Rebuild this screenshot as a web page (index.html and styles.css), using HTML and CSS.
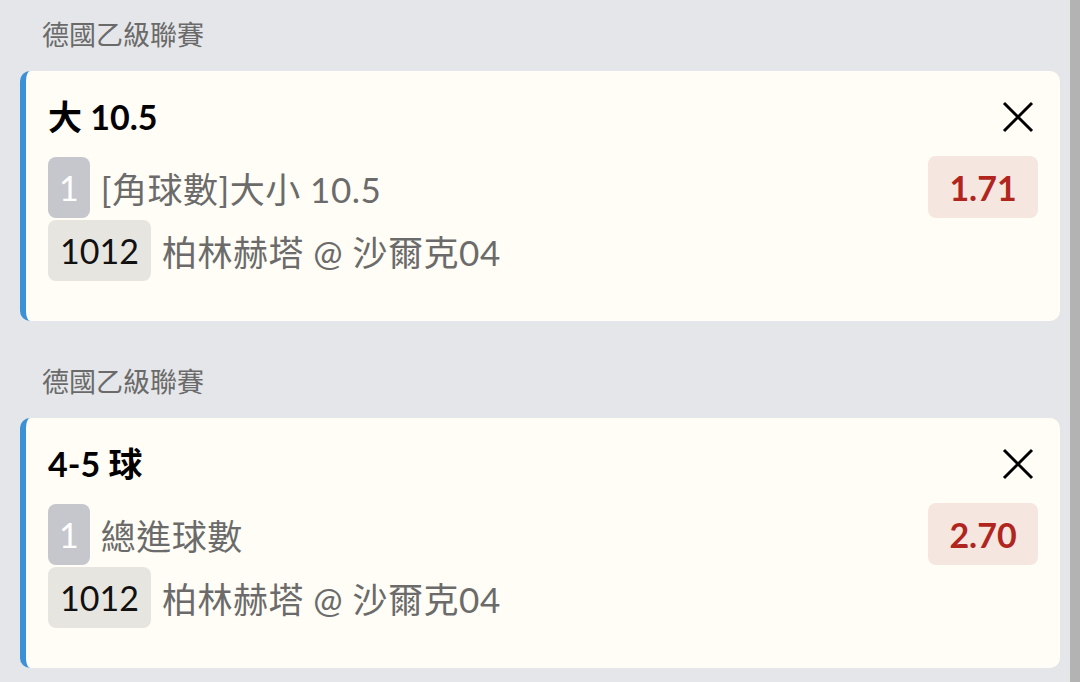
FILE: index.html
```html
<!DOCTYPE html>
<html lang="zh-Hant">
<head>
    <meta charset="UTF-8">
    <meta name="viewport" content="width=device-width, initial-scale=1.0">
    <title>投注單</title>
    <link rel="stylesheet" href="styles.css">
</head>
<body>
    <main class="bet-list">
        <section class="bet-group">
            <h2 class="league">德國乙級聯賽</h2>
            <div class="bet-card">
                <div class="bet-head">
                    <span class="selection">大 10.5</span>
                    <button class="close" type="button" aria-label="移除">
                        <svg width="32" height="32" viewBox="0 0 32 32"><path d="M2 2 L30 30 M30 2 L2 30" stroke="#000" stroke-width="3" fill="none"/></svg>
                    </button>
                </div>
                <div class="bet-row">
                    <div class="bet-info">
                        <span class="tag tag-grey">1</span>
                        <span class="market">[角球數]大小 10.5</span>
                    </div>
                    <span class="odds">1.71</span>
                </div>
                <div class="bet-row">
                    <div class="bet-info">
                        <span class="tag tag-light">1012</span>
                        <span class="market">柏林赫塔 @ 沙爾克04</span>
                    </div>
                </div>
            </div>
        </section>

        <section class="bet-group">
            <h2 class="league">德國乙級聯賽</h2>
            <div class="bet-card">
                <div class="bet-head">
                    <span class="selection">4-5 球</span>
                    <button class="close" type="button" aria-label="移除">
                        <svg width="32" height="32" viewBox="0 0 32 32"><path d="M2 2 L30 30 M30 2 L2 30" stroke="#000" stroke-width="3" fill="none"/></svg>
                    </button>
                </div>
                <div class="bet-row">
                    <div class="bet-info">
                        <span class="tag tag-grey">1</span>
                        <span class="market">總進球數</span>
                    </div>
                    <span class="odds">2.70</span>
                </div>
                <div class="bet-row">
                    <div class="bet-info">
                        <span class="tag tag-light">1012</span>
                        <span class="market">柏林赫塔 @ 沙爾克04</span>
                    </div>
                </div>
            </div>
        </section>
    </main>
    <div class="scrollbar"></div>
</body>
</html>
```

FILE: styles.css
```css
* {
    box-sizing: border-box;
    font-family: Lato, "Noto Sans CJK TC", sans-serif;
}

html, body {
    height: 100%;
}

body {
    margin: 0;
    background-color: #e5e6e9;
    display: flex;
    overflow: hidden;
}

.bet-list {
    flex: 1;
    padding: 0 10px 0 20px;
}

.bet-group {
    margin-bottom: 26px;
}

.league {
    height: 71px;
    margin: 0;
    padding: 0 0 4px 22px;
    display: flex;
    align-items: center;
    font-size: 27px;
    font-weight: normal;
    color: #6a6a6a;
}

.bet-card {
    height: 250px;
    background-color: #fffdf5;
    border-left: 6px solid #3b91d6;
    border-radius: 10px;
    padding: 22px 22px 0 22px;
}

.bet-head {
    display: flex;
    justify-content: space-between;
    align-items: center;
    height: 44px;
    margin-bottom: 19px;
}

.selection {
    font-size: 34px;
    font-weight: bold;
    color: #000;
}

.close {
    background: none;
    border: 0;
    padding: 0;
    margin: 3px 4px 0 0;
    width: 32px;
    height: 32px;
    cursor: pointer;
}

.bet-row {
    display: flex;
    justify-content: space-between;
    align-items: center;
    margin-bottom: 2px;
}

.bet-info {
    display: flex;
    align-items: center;
    gap: 11px;
}

.tag {
    height: 61px;
    border-radius: 8px;
    padding: 0 11px;
    display: flex;
    align-items: center;
    font-size: 34px;
}

.tag-grey {
    background-color: #c6c6cd;
    color: #fff;
}

.tag-light {
    background-color: #e7e5e0;
    color: #111;
    padding: 0 12px;
}

.market {
    font-size: 35px;
    letter-spacing: 0.5px;
    color: #6b6b6b;
}

.odds {
    width: 110px;
    height: 62px;
    border-radius: 8px;
    background-color: #f6e6e0;
    color: #b0261e;
    font-size: 34px;
    font-weight: bold;
    display: flex;
    align-items: center;
    justify-content: center;
}

.scrollbar {
    width: 10px;
    height: 100%;
    background-color: #b3b3b3;
}
```
